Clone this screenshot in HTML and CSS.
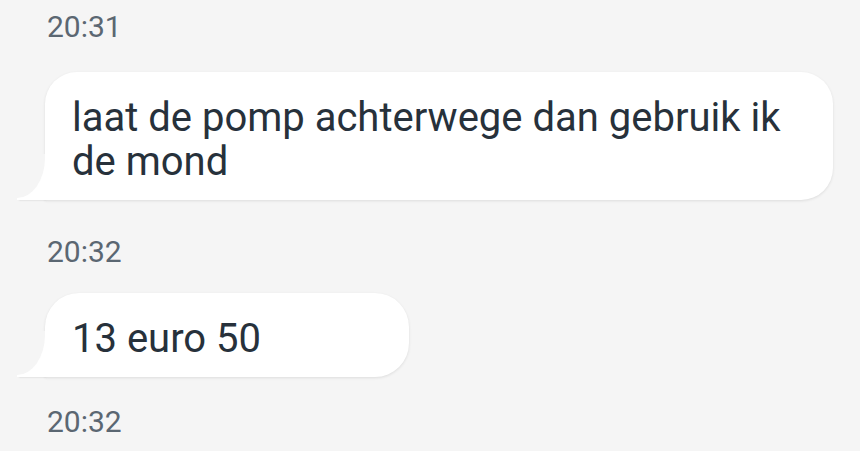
FILE: index.html
```html
<!DOCTYPE html>
<html lang="nl">
<head>
<meta charset="utf-8">
<title>Chat</title>
<link rel="stylesheet" href="styles.css">
</head>
<body>
<main class="chat">
  <div class="time time-first">20:31</div>
  <div class="bubble bubble-first">laat de pomp achterwege dan gebruik ik de mond</div>
  <div class="time time-second">20:32</div>
  <div class="bubble bubble-short">13 euro 50</div>
  <div class="time time-third">20:32</div>
</main>
</body>
</html>
```

FILE: styles.css
```css
html, body {
  margin: 0;
  padding: 0;
  background: #f5f5f5;
  height: 100%;
  overflow: hidden;
}

.chat {
  display: flex;
  flex-direction: column;
  align-items: flex-start;
  padding: 9px 0 0 45px;
  font-family: Roboto, "Noto Sans", sans-serif;
}

.time {
  font-size: 30px;
  line-height: 36px;
  color: #5b6772;
  padding-left: 2px;
}

.time-second { margin-top: 34px; }
.time-third { margin-top: 27px; }

.bubble {
  position: relative;
  box-sizing: border-box;
  background: #ffffff;
  color: #27313b;
  font-size: 40px;
  line-height: 44px;
  padding: 24px 30px 16px 27px;
  border-radius: 32px 32px 32px 0;
  box-shadow: 0 1px 3px rgba(0, 0, 0, 0.10);
}

.bubble::before {
  content: "";
  position: absolute;
  left: -28px;
  bottom: 0;
  width: 31px;
  height: 42px;
  background: #ffffff;
  box-shadow: 0 2px 2px -2px rgba(0, 0, 0, 0.18);
}

.bubble::after {
  content: "";
  position: absolute;
  left: -44px;
  bottom: 2px;
  width: 44px;
  height: 44px;
  background: #f5f5f5;
  border-bottom-right-radius: 28px 40px;
}

.bubble-first {
  width: 788px;
  margin-top: 27px;
}

.bubble-short {
  width: 364px;
  margin-top: 23px;
  border-radius: 34px 34px 34px 0;
}
```
